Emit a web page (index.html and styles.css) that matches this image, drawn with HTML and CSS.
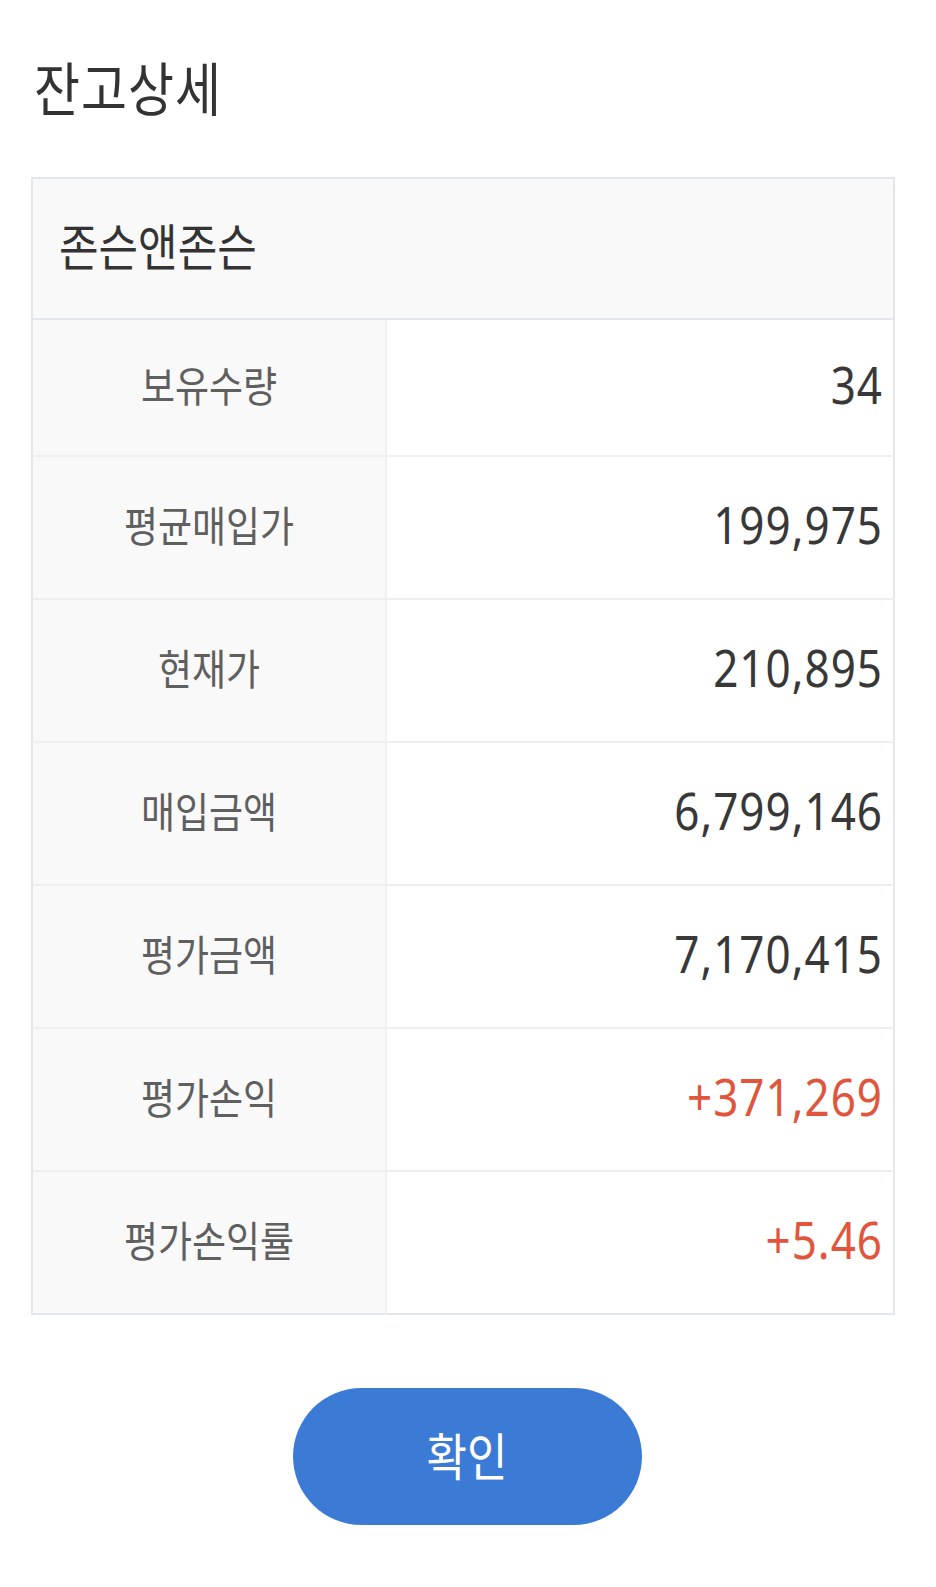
FILE: index.html
```html
<!DOCTYPE html>
<html lang="ko">
<head>
  <meta charset="UTF-8">
  <meta name="viewport" content="width=device-width, initial-scale=1.0">
  <title>잔고상세</title>
  <link rel="stylesheet" href="styles.css">
</head>
<body>

  <!-- 잔고 상세 팝업 -->
  <div class="popup">
    <h1 class="popup-title"><span class="tall">잔고상세</span></h1>

    <table class="detail">
      <thead>
        <tr>
          <th colspan="2" class="stock-name"><span class="tall">존슨앤존슨</span></th>
        </tr>
      </thead>
      <tbody>
        <tr><td class="label"><span class="tall">보유수량</span></td><td class="value"><span class="tall">34</span></td></tr>
        <tr><td class="label"><span class="tall">평균매입가</span></td><td class="value"><span class="tall">199,975</span></td></tr>
        <tr><td class="label"><span class="tall">현재가</span></td><td class="value"><span class="tall">210,895</span></td></tr>
        <tr><td class="label"><span class="tall">매입금액</span></td><td class="value"><span class="tall">6,799,146</span></td></tr>
        <tr><td class="label"><span class="tall">평가금액</span></td><td class="value"><span class="tall">7,170,415</span></td></tr>
        <tr><td class="label"><span class="tall">평가손익</span></td><td class="value up"><span class="tall">+371,269</span></td></tr>
        <tr><td class="label"><span class="tall">평가손익률</span></td><td class="value up"><span class="tall">+5.46</span></td></tr>
      </tbody>
    </table>

    <div class="actions">
      <button class="btn-ok"><span class="tall">확인</span></button>
    </div>
  </div>

</body>
</html>
```

FILE: styles.css
```css
/* 기본 설정 */
body {
  margin: 0;
  padding: 0;
  background: #fff;
  font-family: "Noto Sans", "Noto Sans CJK KR", sans-serif;
  color: #333;
}

/* 원본 글꼴이 세로로 약간 길쭉함 */
.tall {
  display: inline-block;
  transform: scaleY(1.15);
}

.popup {
  padding: 58px 41px 0 31px;
}

.popup-title {
  margin: 0 0 0 3px;
  font-size: 50px;
  font-weight: 400;
  line-height: 62px;
  letter-spacing: 1px;
  color: #333;
}

/* 잔고 테이블 */
.detail {
  width: 100%;
  margin-top: 57px;
  border-collapse: collapse;
  border: 2px solid #e3e6ee;
}

.stock-name {
  height: 131px;
  padding: 0 0 8px 26px;
  text-align: left;
  font-size: 43px;
  font-weight: 400;
  letter-spacing: 0;
  color: #333;
  background: #f9f9fa;
  border-bottom: 2px solid #e3e6ee;
}

.detail td {
  height: 133px;
  padding: 0 0 8px 0;
  border-top: 2px solid #efefef;
}

.detail tbody tr:first-child td {
  height: 127px;
  border-top: none;
}

.label {
  width: 352px;
  text-align: center;
  font-size: 37px;
  color: #5f5f5f;
  background: #f9f9f9;
  border-right: 2px solid #efefef;
}

.value {
  text-align: right;
  padding-right: 10px !important;
  font-size: 44px;
  font-weight: 400;
  letter-spacing: 1px;
  color: #383838;
  background: #fff;
}

.value.up {
  color: #e2553d;
}

/* 확인 버튼 */
.actions {
  display: flex;
  justify-content: center;
  padding: 73px 0 0 8px;
}

.btn-ok {
  width: 349px;
  height: 137px;
  padding: 0 0 6px;
  border: none;
  border-radius: 69px;
  background: #3b7bd6;
  color: #fff;
  font-family: "Noto Sans CJK KR", sans-serif;
  font-size: 44px;
  cursor: pointer;
}
```
